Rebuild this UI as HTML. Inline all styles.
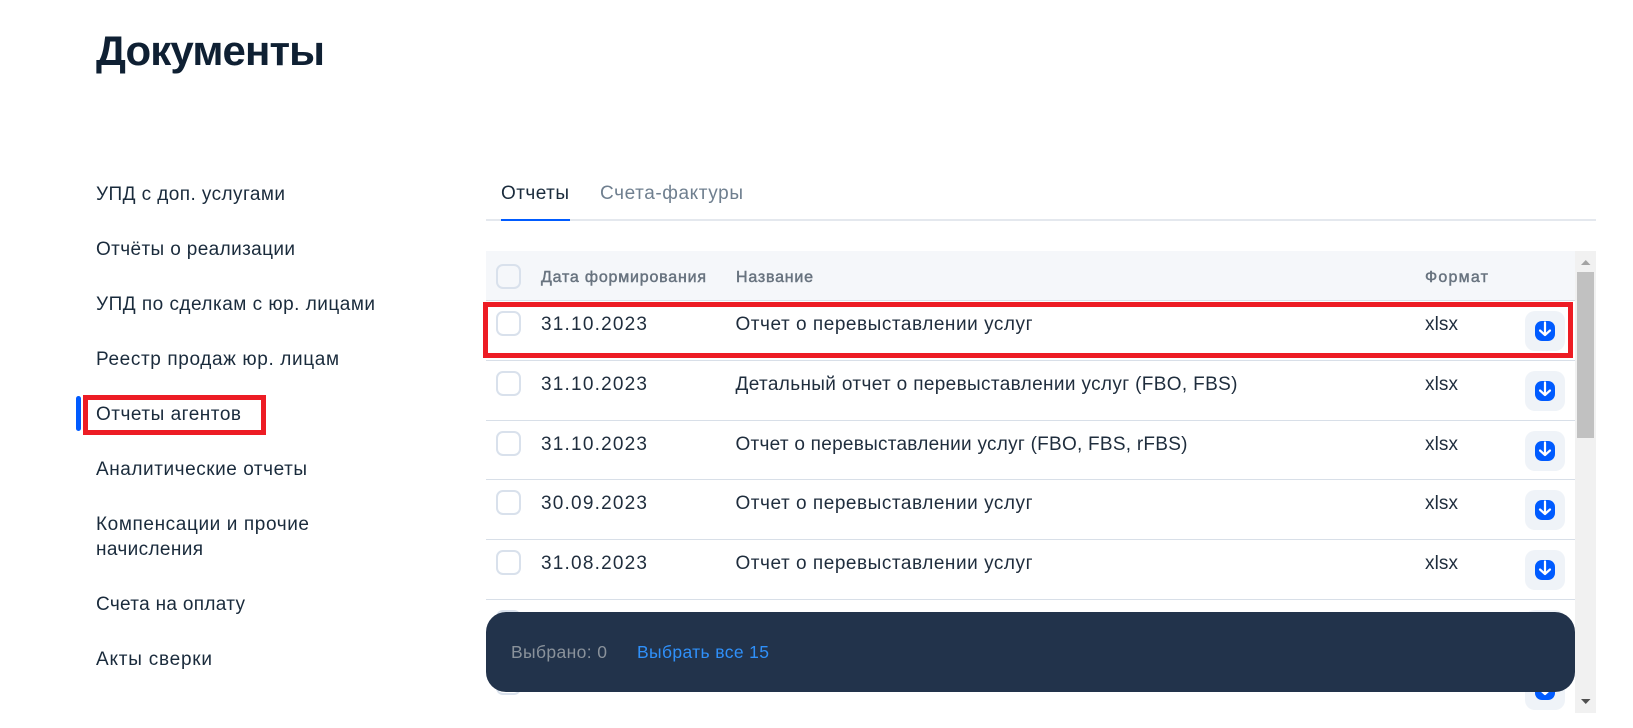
<!DOCTYPE html>
<html lang="ru">
<head>
<meta charset="utf-8">
<title>Документы</title>
<style>
html,body{margin:0;padding:0;width:1633px;height:728px;background:#fff;overflow:hidden}
svg{display:block}
text{font-family:"Liberation Sans",Arial,sans-serif;white-space:pre}
.m{font-size:19px;fill:#1a2b3c}
.t{font-size:19px;fill:#1f2d3d}
.h{font-size:16px;fill:#68737f;stroke:#68737f;stroke-width:.45px}
.cb{fill:none;stroke:#d9e1ec;stroke-width:2}
.l{fill:#d8dfe8}
</style>
</head>
<body>
<svg xmlns="http://www.w3.org/2000/svg" width="1633" height="728" viewBox="0 0 1633 728">
<defs>
  <g id="dl">
    <rect width="40" height="40" rx="10" fill="#eff3f8"/>
    <rect x="10" y="10" width="20" height="20" rx="7" fill="#005bff"/>
    <path d="M20 11.5V23.5M15 19.5L20 24L25 19.5" fill="none" stroke="#fff" stroke-width="2.2" stroke-linecap="round" stroke-linejoin="round"/>
  </g>
  <clipPath id="tc"><rect x="486" y="251" width="1090" height="462"/></clipPath>
</defs>

<text x="96" y="65" font-size="42" font-weight="700" fill="#0f2033" textLength="229" lengthAdjust="spacing">Документы</text>

<text class="m" x="96" y="200" textLength="189" lengthAdjust="spacing">УПД с доп. услугами</text>
<text class="m" x="96" y="255" textLength="199" lengthAdjust="spacing">Отчёты о реализации</text>
<text class="m" x="96" y="310" textLength="279" lengthAdjust="spacing">УПД по сделкам с юр. лицами</text>
<text class="m" x="96" y="365" textLength="243" lengthAdjust="spacing">Реестр продаж юр. лицам</text>
<rect x="76" y="396" width="5" height="35" rx="2.5" fill="#005bff"/>
<text class="m" x="96" y="420" textLength="145" lengthAdjust="spacing">Отчеты агентов</text>
<rect x="85.5" y="397.5" width="178" height="35" fill="none" stroke="#ed1c24" stroke-width="5"/>
<text class="m" x="96" y="475" textLength="211" lengthAdjust="spacing">Аналитические отчеты</text>
<text class="m" x="96" y="530" textLength="213" lengthAdjust="spacing">Компенсации и прочие</text>
<text class="m" x="96" y="555" textLength="107" lengthAdjust="spacing">начисления</text>
<text class="m" x="96" y="610" textLength="149" lengthAdjust="spacing">Счета на оплату</text>
<text class="m" x="96" y="665" textLength="116" lengthAdjust="spacing">Акты сверки</text>

<text class="m" x="501" y="199" textLength="68" lengthAdjust="spacing">Отчеты</text>
<text x="600" y="199" font-size="19" fill="#6f7f8f" textLength="143" lengthAdjust="spacing">Счета-фактуры</text>
<rect x="486" y="219" width="1110" height="2" fill="#e4e8ee"/>
<rect x="501" y="219" width="69" height="2" fill="#005bff"/>

<rect x="1575" y="251" width="21" height="462" fill="#f1f1f1"/>
<rect x="1577" y="272" width="17" height="166" fill="#c1c1c1"/>
<path d="M1581 265H1590.5L1585.75 260Z" fill="#a3a3a3"/>
<path d="M1581 699H1590.5L1585.75 704Z" fill="#505050"/>

<g clip-path="url(#tc)">
  <rect x="486" y="251" width="1089" height="49" fill="#f5f7fa"/>
  <rect class="l" x="486" y="300" width="1089" height="1"/>
  <rect class="l" x="486" y="360" width="1089" height="1"/>
  <rect class="l" x="486" y="420" width="1089" height="1"/>
  <rect class="l" x="486" y="479" width="1089" height="1"/>
  <rect class="l" x="486" y="539" width="1089" height="1"/>
  <rect class="l" x="486" y="599" width="1089" height="1"/>

  <rect class="cb" x="497" y="265" width="23" height="23" rx="6"/>
  <text class="h" x="541" y="282" textLength="165" lengthAdjust="spacing">Дата формирования</text>
  <text class="h" x="736" y="282" textLength="77" lengthAdjust="spacing">Название</text>
  <text class="h" x="1425" y="282" textLength="63" lengthAdjust="spacing">Формат</text>

  <rect class="cb" x="497" y="312" width="23" height="23" rx="6"/>
  <text class="t" x="541" y="330" textLength="106" lengthAdjust="spacing">31.10.2023</text>
  <text class="t" x="735.5" y="330" textLength="297" lengthAdjust="spacing">Отчет о перевыставлении услуг</text>
  <text class="t" x="1425" y="330" textLength="33" lengthAdjust="spacing">xlsx</text>
  <use href="#dl" x="1525" y="311"/>

  <rect class="cb" x="497" y="372" width="23" height="23" rx="6"/>
  <text class="t" x="541" y="390" textLength="106" lengthAdjust="spacing">31.10.2023</text>
  <text class="t" x="735.5" y="390" textLength="502" lengthAdjust="spacing">Детальный отчет о перевыставлении услуг (FBO, FBS)</text>
  <text class="t" x="1425" y="390" textLength="33" lengthAdjust="spacing">xlsx</text>
  <use href="#dl" x="1525" y="371"/>

  <rect class="cb" x="497" y="432" width="23" height="23" rx="6"/>
  <text class="t" x="541" y="450" textLength="106" lengthAdjust="spacing">31.10.2023</text>
  <text class="t" x="735.5" y="450" textLength="452" lengthAdjust="spacing">Отчет о перевыставлении услуг (FBO, FBS, rFBS)</text>
  <text class="t" x="1425" y="450" textLength="33" lengthAdjust="spacing">xlsx</text>
  <use href="#dl" x="1525" y="431"/>

  <rect class="cb" x="497" y="491" width="23" height="23" rx="6"/>
  <text class="t" x="541" y="509" textLength="106" lengthAdjust="spacing">30.09.2023</text>
  <text class="t" x="735.5" y="509" textLength="297" lengthAdjust="spacing">Отчет о перевыставлении услуг</text>
  <text class="t" x="1425" y="509" textLength="33" lengthAdjust="spacing">xlsx</text>
  <use href="#dl" x="1525" y="490"/>

  <rect class="cb" x="497" y="551" width="23" height="23" rx="6"/>
  <text class="t" x="541" y="569" textLength="106" lengthAdjust="spacing">31.08.2023</text>
  <text class="t" x="735.5" y="569" textLength="297" lengthAdjust="spacing">Отчет о перевыставлении услуг</text>
  <text class="t" x="1425" y="569" textLength="33" lengthAdjust="spacing">xlsx</text>
  <use href="#dl" x="1525" y="550"/>

  <rect class="cb" x="497" y="611" width="23" height="23" rx="6"/>
  <use href="#dl" x="1525" y="610"/>

  <rect class="cb" x="497" y="671" width="23" height="23" rx="6"/>
  <text class="t" x="735.5" y="688" textLength="297" lengthAdjust="spacing">Отчет о перевыставлении услуг</text>
  <use href="#dl" x="1525" y="670"/>
</g>

<rect x="486" y="612" width="1089" height="80" rx="20" fill="#22334b"/>
<text x="511" y="658" font-size="17.5" fill="#8a929b" textLength="96" lengthAdjust="spacing">Выбрано: 0</text>
<text x="637" y="658" font-size="17.5" fill="#2f90fa" textLength="132" lengthAdjust="spacing">Выбрать все 15</text>

<rect x="485.5" y="304.5" width="1085" height="51" fill="none" stroke="#ed1c24" stroke-width="5"/>
</svg>
</body>
</html>
